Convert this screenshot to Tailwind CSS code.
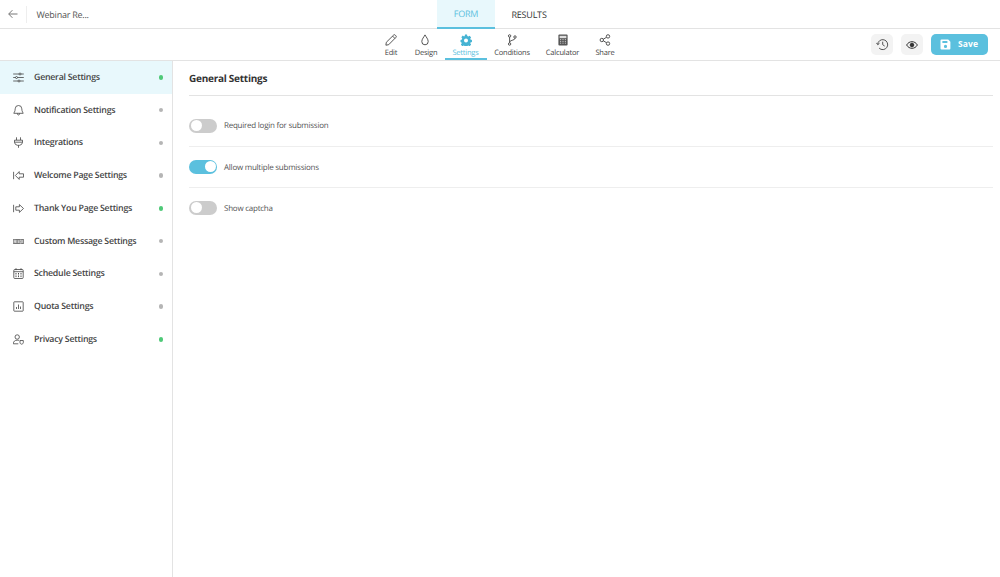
<!DOCTYPE html>
<html>
<head>
<meta charset="utf-8">
<script src="https://cdn.jsdelivr.net/npm/@tailwindcss/browser@4"></script>
</head>
<body class="bg-white font-['Open_Sans',sans-serif] text-[#444] [text-rendering:geometricPrecision]">
<div class="w-[1000px] h-[577px] flex flex-col overflow-hidden">
  <!-- top bar -->
  <header class="h-[29px] shrink-0 border-b border-[#e3e3e3] flex items-stretch relative">
    <div class="w-[26px] flex items-center pl-[8px]">
      <svg class="w-[10px] h-[10px]" viewBox="0 0 10 10" fill="none" stroke="#777" stroke-width="1"><path d="M9.500 5H.8M4.400 1.200.7 5l3.700 3.800"/></svg>
    </div>
    <div class="w-px h-[17px] bg-[#eee] self-center"></div>
    <div class="ml-[9.500px] text-[9px] tracking-[-0.25px] text-[#555] flex items-center pt-[1px]">Webinar Re...</div>
    <div class="absolute left-[437px] top-0 flex h-[29px]">
      <div class="w-[58px] bg-[#e8f8fc] border-b-2 border-[#5bc0de] text-[#5bc0de] text-[9px] tracking-[-0.2px] flex items-center justify-center pt-[1px]">FORM</div>
      <div class="w-[68px] text-[#333] text-[9px] tracking-[-0.2px] font-medium flex items-center justify-center pt-[1px]">RESULTS</div>
    </div>
  </header>
  <!-- tool bar -->
  <div class="h-[32px] shrink-0 border-b border-[#e3e3e3] relative flex justify-center">
    <nav class="absolute left-[374.500px] top-0 flex h-[31px] text-[7.500px] tracking-[-0.2px] text-[#444] font-medium">
      <div class="w-[33px] flex flex-col items-center pt-[5px]">
        <svg class="w-[12px] h-[12px]" viewBox="0 0 12 12" fill="none" stroke="#444" stroke-width=".9"><path d="M1.300 8.300 8.600 1.100a1.100 1.100 0 0 1 1.600 0l.7.7a1.100 1.100 0 0 1 0 1.600L3.700 10.700l-2.800.5zM7.600 2.100l2.300 2.300"/></svg>
        <span class="mt-[2px] leading-[10px]">Edit</span>
      </div>
      <div class="w-[37px] flex flex-col items-center pt-[5px]">
        <svg class="w-[12px] h-[12px] -ml-[2px]" viewBox="0 0 12 12" fill="none" stroke="#444" stroke-width=".9"><path d="M6 .9C5 3 2.800 5 2.800 7.600a3.200 3.200 0 0 0 6.400 0C9.200 5 7 3 6 .9z"/></svg>
        <span class="mt-[2px] leading-[10px]">Design</span>
      </div>
      <div class="w-[42px] h-[31px] border-b-2 border-[#5bc0de] text-[#5bc0de] flex flex-col items-center pt-[5px]">
        <svg class="w-[12px] h-[12px]" viewBox="0 0 24 24" fill="#45b3d3"><path fill-rule="evenodd" d="M10 1h4l.6 3 2.200 1 2.600-1.600 2.800 3.400-1.700 2.500.5 1.900 2.900.8v4l-2.900.8-.5 1.900 1.700 2.500-2.800 3.400-2.600-1.600-2.200 1-.6 2h-4l-.6-2-2.200-1-2.600 1.600-2.800-3.400 1.700-2.500-.5-1.900L1 15.800v-4l2.900-.8.5-1.900-1.700-2.500 2.800-3.400L8.100 5l1.300-1zM12 9a4 4 0 1 0 0 8 4 4 0 0 0 0-8z"/></svg>
        <span class="mt-[2px] leading-[10px]">Settings</span>
      </div>
      <div class="w-[51px] flex flex-col items-center pt-[5px]">
        <svg class="w-[12px] h-[12px]" viewBox="0 0 12 12" fill="none" stroke="#444" stroke-width=".9"><circle cx="3.600" cy="1.900" r="1.200"/><circle cx="3.600" cy="10" r="1.200"/><circle cx="9" cy="3" r="1.200"/><path d="M3.600 3.100v5.700M9 4.200c0 2.200-4 1.600-5.400 3.600"/></svg>
        <span class="mt-[2px] leading-[10px]">Conditions</span>
      </div>
      <div class="w-[50px] flex flex-col items-center pt-[5px]">
        <svg class="w-[12px] h-[12px]" viewBox="0 0 12 12"><rect x="1.400" y=".6" width="9.200" height="10.800" rx="1" fill="#555"/><rect x="2.600" y="1.800" width="6.800" height="2.400" fill="#ddd"/><path d="M3 5.600h1.200M5.400 5.600h1.200M7.800 5.600H9M3 7.400h1.200M5.400 7.400h1.200M7.800 7.400H9M3 9.200h1.200M5.400 9.200h1.200M7.800 9.200H9" stroke="#ddd" stroke-width=".8"/></svg>
        <span class="mt-[2px] leading-[10px]">Calculator</span>
      </div>
      <div class="w-[35px] flex flex-col items-center pt-[5px]">
        <svg class="w-[12px] h-[12px]" viewBox="0 0 12 12" fill="none" stroke="#444" stroke-width=".9"><circle cx="9" cy="2.400" r="1.700"/><circle cx="2.800" cy="6" r="1.700"/><circle cx="9" cy="9.600" r="1.700"/><path d="M4.300 5.200 7.500 3.300M4.300 6.800l3.200 1.900"/></svg>
        <span class="mt-[2px] leading-[10px]">Share</span>
      </div>
    </nav>
    <div class="absolute right-[12px] top-[5px] flex items-center gap-[8px]">
      <button class="w-[22px] h-[21px] rounded-[5px] bg-[#f3f3f3] flex items-center justify-center">
        <svg class="w-[13px] h-[13px]" viewBox="0 0 13 13" fill="none" stroke="#555" stroke-width="1"><path d="M1.700 6.500a5 5 0 1 1 1.400 3.600M.4 4.900l1.400 1.800 1.700-1.500M6.700 3.700v3l2 1.400"/></svg>
      </button>
      <button class="w-[22px] h-[21px] rounded-[5px] bg-[#f3f3f3] flex items-center justify-center">
        <svg class="w-[12px] h-[12px]" viewBox="0 0 12 12" fill="none" stroke="#333" stroke-width="1"><path d="M.6 6C2 3.700 3.900 2.700 6 2.700S10 3.700 11.400 6C10 8.300 8.100 9.300 6 9.300S2 8.300.6 6z"/><circle cx="6" cy="6" r="1.800" fill="#333"/></svg>
      </button>
      <button class="w-[57px] h-[21px] rounded-[5px] bg-[#5bc0de] text-white text-[8.500px] font-bold flex items-center justify-start pl-[9px] gap-[7px] tracking-[0.1px]">
        <svg class="w-[11px] h-[11px]" viewBox="0 0 11 11" fill="#fff"><path fill-rule="evenodd" d="M1.500.6h6.700L10.400 2.800v6.600a1 1 0 0 1-1 1H1.500a1 1 0 0 1-1-1V1.600a1 1 0 0 1 1-1zM2.400 1.900v2.200h5V1.900zM5.500 5.800a1.600 1.600 0 1 0 0 3.200 1.600 1.600 0 0 0 0-3.200z"/></svg>
        <span>Save</span>
      </button>
    </div>
  </div>
  <!-- body -->
  <div class="flex flex-1 min-h-0">
    <aside class="w-[173px] shrink-0 border-r border-[#e3e3e3] text-[8.800px] tracking-[-0.25px] font-semibold text-[#444]">
      <div class="h-[32.750px] bg-[#e8f8fc] flex items-center pl-[13px] pr-[9px]">
        <svg class="w-[11px] h-[11px] shrink-0" viewBox="0 0 11 11" fill="none" stroke="#444" stroke-width=".8"><path d="M.2 2h10.600M.2 5.500h10.600M.2 9h10.600"/><circle cx="7" cy="2" r="1" fill="#e8f8fc"/><circle cx="3.500" cy="5.500" r="1" fill="#e8f8fc"/><circle cx="6" cy="9" r="1" fill="#e8f8fc"/></svg>
        <span class="ml-[10px] flex-1">General Settings</span>
        <span class="w-[4.500px] h-[4.500px] rounded-full bg-[#4fc978]"></span>
      </div>
      <div class="h-[32.750px] flex items-center pl-[13px] pr-[9px]">
        <svg class="w-[11px] h-[11px] shrink-0" viewBox="0 0 11 11" fill="none" stroke="#444" stroke-width=".8"><path d="M5.500.5a3.300 3.300 0 0 0-3.300 3.300c0 2.800-1.400 4-1.400 4.500h9.400c0-.5-1.400-1.700-1.400-4.500A3.300 3.300 0 0 0 5.500.5zM4.400 8.400a1.100 1.600 0 0 0 2.200 0"/></svg>
        <span class="ml-[10px] flex-1">Notification Settings</span>
        <span class="w-[4.500px] h-[4.500px] rounded-full bg-[#b5b5b5]"></span>
      </div>
      <div class="h-[32.750px] flex items-center pl-[13px] pr-[9px]">
        <svg class="w-[11px] h-[11px] shrink-0" viewBox="0 0 11 11" fill="none" stroke="#444" stroke-width=".8"><path d="M3.500.3v2.700M7.500.3v2.700M1.500 3.200h8v2.300a3.500 3.500 0 0 1-3 2.800H4.500a3.500 3.500 0 0 1-3-2.800zM1.500 5.200h8M5.500 8.300v2.500"/></svg>
        <span class="ml-[10px] flex-1">Integrations</span>
        <span class="w-[4.500px] h-[4.500px] rounded-full bg-[#b5b5b5]"></span>
      </div>
      <div class="h-[32.750px] flex items-center pl-[13px] pr-[9px]">
        <svg class="w-[11px] h-[11px] shrink-0" viewBox="0 0 11 11" fill="none" stroke="#444" stroke-width=".8"><path d="M.6 1.800v7.400M6.200 1.600 2.400 5.500l3.800 3.900V7.200h4.300V3.800H6.200z"/></svg>
        <span class="ml-[10px] flex-1">Welcome Page Settings</span>
        <span class="w-[4.500px] h-[4.500px] rounded-full bg-[#b5b5b5]"></span>
      </div>
      <div class="h-[32.750px] flex items-center pl-[13px] pr-[9px]">
        <svg class="w-[11px] h-[11px] shrink-0" viewBox="0 0 11 11" fill="none" stroke="#444" stroke-width=".8"><path d="M.6 1.800v7.400M6.400 1.600l4.100 3.900-4.100 3.900V7.200H2.800V3.800h3.600z"/></svg>
        <span class="ml-[10px] flex-1">Thank You Page Settings</span>
        <span class="w-[4.500px] h-[4.500px] rounded-full bg-[#4fc978]"></span>
      </div>
      <div class="h-[32.750px] flex items-center pl-[13px] pr-[9px]">
        <svg class="w-[11px] h-[11px] shrink-0" viewBox="0 0 11 11"><rect x=".1" y="3" width="10.800" height="5" fill="#777"/><path d="M1.200 7V4.200h1.300V7M1.200 5.700h1.300M3.900 4v3M5.500 4.200V7M6.900 4.200h1.400V7H6.900zM9.600 4v3" fill="none" stroke="#fff" stroke-width=".6"/></svg>
        <span class="ml-[10px] flex-1">Custom Message Settings</span>
        <span class="w-[4.500px] h-[4.500px] rounded-full bg-[#b5b5b5]"></span>
      </div>
      <div class="h-[32.750px] flex items-center pl-[13px] pr-[9px]">
        <svg class="w-[11px] h-[11px] shrink-0" viewBox="0 0 11 11" fill="none" stroke="#444" stroke-width=".8"><rect x=".8" y="1.500" width="9.400" height="9" rx="1"/><path d="M.8 3.700h9.400M3 .2v2M8 .2v2"/><path d="M2.500 5.500h1M5 5.500h1M7.500 5.500h1M2.500 7h1M5 7h1M7.500 7h1M2.500 8.600h1M5 8.600h1M7.500 8.600h1" stroke-width="1"/></svg>
        <span class="ml-[10px] flex-1">Schedule Settings</span>
        <span class="w-[4.500px] h-[4.500px] rounded-full bg-[#b5b5b5]"></span>
      </div>
      <div class="h-[32.750px] flex items-center pl-[13px] pr-[9px]">
        <svg class="w-[11px] h-[11px] shrink-0" viewBox="0 0 11 11" fill="none" stroke="#444" stroke-width=".8"><rect x=".8" y=".8" width="9.400" height="9.400" rx=".6"/><path d="M3.500 8V6M5.500 8V3.500M7.500 8V5.500"/></svg>
        <span class="ml-[10px] flex-1">Quota Settings</span>
        <span class="w-[4.500px] h-[4.500px] rounded-full bg-[#b5b5b5]"></span>
      </div>
      <div class="h-[32.750px] flex items-center pl-[13px] pr-[9px]">
        <svg class="w-[11px] h-[11px] shrink-0" viewBox="0 0 11 11" fill="none" stroke="#444" stroke-width=".8"><circle cx="4.200" cy="3" r="2.200"/><path d="M.3 9.800c0-2.400 1.600-3.600 3.900-3.600 .8 0 1.400.1 2 .4M.3 9.800h5"/><path d="M7 6.500h3.300v2.200c0 .8-.9 1.300-1.650 1.500C7.900 10 7 9.500 7 8.700z"/></svg>
        <span class="ml-[10px] flex-1">Privacy Settings</span>
        <span class="w-[4.500px] h-[4.500px] rounded-full bg-[#4fc978]"></span>
      </div>
    </aside>
    <main class="flex-1 pl-[16px] pr-[7px]">
      <div class="h-[35px] border-b border-[#e3e3e3] flex items-center pt-[1px] text-[10px] tracking-[-0.25px] font-bold text-[#333]">General Settings</div>
      <div class="h-[51px] border-b border-[#eee] pt-[9px] flex items-center gap-[7px] text-[8px] tracking-[-0.24px] text-[#555]">
        <span class="w-[28px] h-[14px] rounded-full bg-[#ccc] p-[1.500px] flex justify-start"><span class="w-[11px] h-[11px] rounded-full bg-white"></span></span>
        <span>Required login for submission</span>
      </div>
      <div class="h-[41px] border-b border-[#eee] pb-[1px] flex items-center gap-[7px] text-[8px] tracking-[-0.24px] text-[#555]">
        <span class="w-[28px] h-[14px] rounded-full bg-[#5bc0de] p-[1.500px] flex justify-end"><span class="w-[11px] h-[11px] rounded-full bg-white"></span></span>
        <span class="pt-[2px]">Allow multiple submissions</span>
      </div>
      <div class="h-[41px] pb-[2px] flex items-center gap-[7px] text-[8px] tracking-[-0.24px] text-[#555]">
        <span class="w-[28px] h-[14px] rounded-full bg-[#ccc] p-[1.500px] flex justify-start"><span class="w-[11px] h-[11px] rounded-full bg-white"></span></span>
        <span class="pt-[2px]">Show captcha</span>
      </div>
    </main>
  </div>
</div>
</body>
</html>
